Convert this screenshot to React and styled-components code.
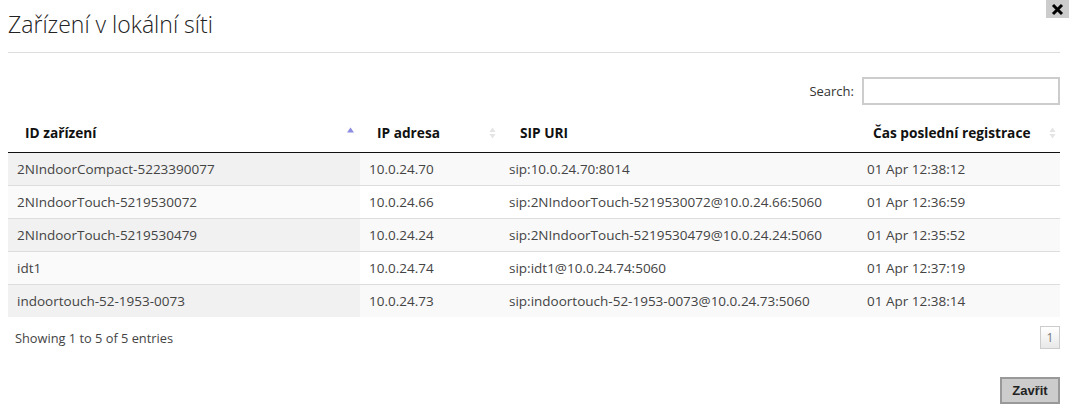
import React from "react";
import styled, { createGlobalStyle } from "styled-components";

const Global = createGlobalStyle`
  html, body { margin: 0; padding: 0; background: #fff; }
  body { font-family: "Open Sans", "Noto Sans", sans-serif; color: #333; }
`;

const Dialog = styled.div`
  position: relative;
  width: 1072px;
  height: 410px;
  box-sizing: border-box;
  padding: 0 12px 0 8px;
  display: flex;
  flex-direction: column;
`;

const Title = styled.h1`
  margin: 0;
  padding: 10px 0 14px;
  font-size: 23px;
  font-weight: 300;
  color: #222;
  line-height: 28px;
  border-bottom: 1px solid #ddd;
`;

const CloseBtn = styled.button`
  position: absolute;
  top: 0;
  right: 3px;
  width: 23px;
  height: 18px;
  border: none;
  background: #ccc;
  padding: 0;
  display: flex;
  align-items: center;
  justify-content: center;
`;

const SearchRow = styled.div`
  display: flex;
  justify-content: flex-end;
  align-items: center;
  gap: 8px;
  margin-top: 24px;
  font-size: 13px;
  color: #333;
`;

const SearchInput = styled.input`
  width: 194px;
  height: 24px;
  box-sizing: content-box;
  padding: 0;
  border: 2px solid #ccc;
  outline: none;
`;

const Table = styled.table`
  margin-top: 9px;
  width: 100%;
  border-collapse: collapse;
  font-size: 13.5px;
`;

const Th = styled.th`
  text-align: left;
  font-weight: 700;
  font-size: 13.7px;
  color: #111;
  padding: 10px 18px 10px ${p => p.$pl || 17}px;
  border-bottom: 1px solid #111;
  position: relative;
  white-space: nowrap;
  height: 18px;
  line-height: 18px;
`;

const SortIcon = styled.svg`
  position: absolute;
  right: ${p => p.$r || 6}px;
  top: 50%;
  transform: translateY(-50%);
`;

const Tr = styled.tr`
  background: ${p => (p.$odd ? "#f9f9f9" : "#fff")};
`;

const Td = styled.td`
  padding: 0 9px;
  height: 32px;
  font-weight: 400;
  color: #444;
  border-top: 1px solid #ddd;
  white-space: nowrap;
  background: ${p => (p.$sorted ? (p.$odd ? "#f1f1f1" : "#fafafa") : "transparent")};
`;

const Footer = styled.div`
  display: flex;
  justify-content: space-between;
  align-items: center;
  margin-top: 9px;
  font-size: 12.8px;
  color: #444;
  padding-left: 7px;
`;

const PageBtn = styled.button`
  width: 20px;
  height: 23px;
  box-sizing: border-box;
  border: 1px solid #ccc;
  background: linear-gradient(#fff, #e8e8e8);
  color: #777;
  font-size: 12px;
  padding: 0;
  font-family: "Open Sans", sans-serif;
`;

const Actions = styled.div`
  display: flex;
  justify-content: flex-end;
  margin-top: 28px;
`;

const CloseAction = styled.button`
  width: 60px;
  height: 27px;
  box-sizing: border-box;
  border: 2px solid #999;
  background: #ccc;
  font-family: "Liberation Sans", Arial, sans-serif;
  font-weight: 700;
  font-size: 13px;
  color: #222;
  padding: 0;
`;

const Sort = ({ dir, r }) => (
  <SortIcon $r={r} width="7" height="13" viewBox="0 0 7 13">
    {dir === "asc" ? (
      <path d="M0 6 L3.5 1 L7 6 Z" fill="#8c8ce0" />
    ) : (
      <>
        <path d="M0.5 5.5 L3.5 1 L6.5 5.5 Z" fill="#e4e4e4" />
        <path d="M0.5 7.5 L3.5 12 L6.5 7.5 Z" fill="#e4e4e4" />
      </>
    )}
  </SortIcon>
);

const rows = [
  ["2NIndoorCompact-5223390077", "10.0.24.70", "sip:10.0.24.70:8014", "01 Apr 12:38:12"],
  ["2NIndoorTouch-5219530072", "10.0.24.66", "sip:2NIndoorTouch-5219530072@10.0.24.66:5060", "01 Apr 12:36:59"],
  ["2NIndoorTouch-5219530479", "10.0.24.24", "sip:2NIndoorTouch-5219530479@10.0.24.24:5060", "01 Apr 12:35:52"],
  ["idt1", "10.0.24.74", "sip:idt1@10.0.24.74:5060", "01 Apr 12:37:19"],
  ["indoortouch-52-1953-0073", "10.0.24.73", "sip:indoortouch-52-1953-0073@10.0.24.73:5060", "01 Apr 12:38:14"],
];

export default function App() {
  return (
    <>
      <Global />
      <Dialog>
        <Title>Zařízení v lokální síti</Title>
        <CloseBtn aria-label="close">
          <svg width="13" height="13" viewBox="0 0 13 13">
            <path d="M2 2 L11 11 M11 2 L2 11" stroke="#000" strokeWidth="3" />
          </svg>
        </CloseBtn>
        <SearchRow>
          <span>Search:</span>
          <SearchInput />
        </SearchRow>
        <Table>
          <colgroup>
            <col style={{ width: 352 }} />
            <col style={{ width: 140 }} />
            <col style={{ width: 358 }} />
            <col />
          </colgroup>
          <thead>
            <tr>
              <Th>ID zařízení<Sort dir="asc" r={6} /></Th>
              <Th>IP adresa<Sort r={4} /></Th>
              <Th $pl={20}>SIP URI</Th>
              <Th $pl={15}>Čas poslední registrace<Sort r={4} /></Th>
            </tr>
          </thead>
          <tbody>
            {rows.map((r, i) => (
              <Tr key={i} $odd={i % 2 === 0}>
                <Td $sorted $odd={i % 2 === 0}>{r[0]}</Td>
                <Td>{r[1]}</Td>
                <Td>{r[2]}</Td>
                <Td>{r[3]}</Td>
              </Tr>
            ))}
          </tbody>
        </Table>
        <Footer>
          <span>Showing 1 to 5 of 5 entries</span>
          <PageBtn>1</PageBtn>
        </Footer>
        <Actions>
          <CloseAction>Zavřit</CloseAction>
        </Actions>
      </Dialog>
    </>
  );
}
